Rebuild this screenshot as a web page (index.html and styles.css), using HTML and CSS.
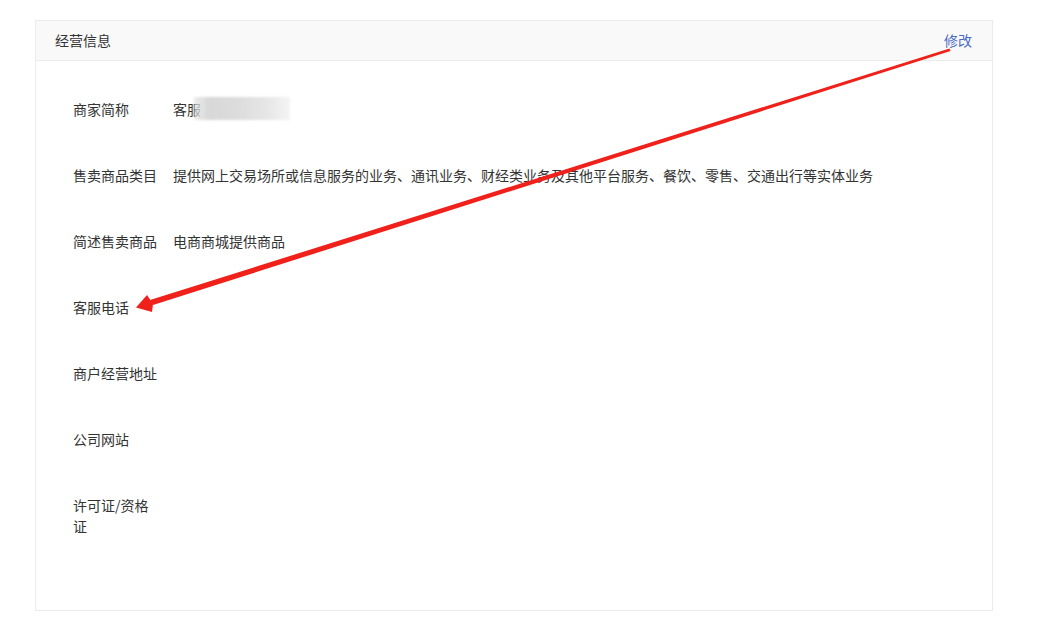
FILE: index.html
```html
<!DOCTYPE html>
<html lang="zh-CN">
<head>
<meta charset="utf-8">
<link rel="stylesheet" href="styles.css">
</head>
<body>
<div class="page">
  <section class="card">
    <header class="card-head">
      <span class="title">经营信息</span>
      <a class="edit">修改</a>
    </header>
    <div class="card-body">
      <div class="row">
        <div class="label">商家简称</div>
        <div class="value">客服<span class="blur"></span></div>
      </div>
      <div class="row">
        <div class="label">售卖商品类目</div>
        <div class="value">提供网上交易场所或信息服务的业务、通讯业务、财经类业务及其他平台服务、餐饮、零售、交通出行等实体业务</div>
      </div>
      <div class="row">
        <div class="label">简述售卖商品</div>
        <div class="value">电商商城提供商品</div>
      </div>
      <div class="row">
        <div class="label">客服电话</div>
        <div class="value"></div>
      </div>
      <div class="row">
        <div class="label">商户经营地址</div>
        <div class="value"></div>
      </div>
      <div class="row">
        <div class="label">公司网站</div>
        <div class="value"></div>
      </div>
      <div class="row">
        <div class="label">许可证/资格证</div>
        <div class="value"></div>
      </div>
    </div>
  </section>
  <svg class="arrow" width="1052" height="625" viewBox="0 0 1052 625">
    <polygon fill="#f0201a" points="949.5,48.5 950.5,51 153,305 150,300"/>
    <polygon fill="#f0201a" points="136,307.5 147,295 151,301 153,304 152,312"/>
  </svg>
</div>
</body>
</html>
```

FILE: styles.css
```css
html, body {
  margin: 0;
  padding: 0;
  background: #fff;
}
body {
  font-family: "Microsoft YaHei", "Noto Sans CJK SC", sans-serif;
  font-size: 14px;
  color: #333;
}
.page {
  position: relative;
  width: 1052px;
  height: 625px;
  padding: 20px 0 0 35px;
  box-sizing: border-box;
}
.card {
  width: 958px;
  height: 591px;
  box-sizing: border-box;
  border: 1px solid #ebebeb;
  background: #fff;
}
.card-head {
  height: 38px;
  background: #f9f9f9;
  border-bottom: 1px solid #ebebeb;
  display: flex;
  align-items: center;
  justify-content: space-between;
  padding: 0 20px 1px 19px;
  line-height: 21px;
}
.title {
  color: #333;
}
.edit {
  color: #4a6dc4;
  cursor: pointer;
}
.card-body {
  padding: 38px 0 0 37px;
  display: flex;
  flex-direction: column;
  gap: 45px;
}
.row {
  display: grid;
  grid-template-columns: 86px 1fr;
  column-gap: 14px;
  line-height: 21px;
}
.label {
  color: #333;
}
.value {
  color: #333;
}
.blur {
  display: inline-block;
  vertical-align: top;
  width: 96px;
  height: 23px;
  margin-left: -7px;
  margin-top: -2px;
  background: linear-gradient(90deg, rgba(225,225,225,0.6) 0%, #d8d8d8 15%, #dcdcdc 45%, #e6e6e6 75%, #f4f4f4 100%);
  filter: blur(1px);
}
.arrow {
  position: absolute;
  left: 0;
  top: 0;
  pointer-events: none;
}
```
